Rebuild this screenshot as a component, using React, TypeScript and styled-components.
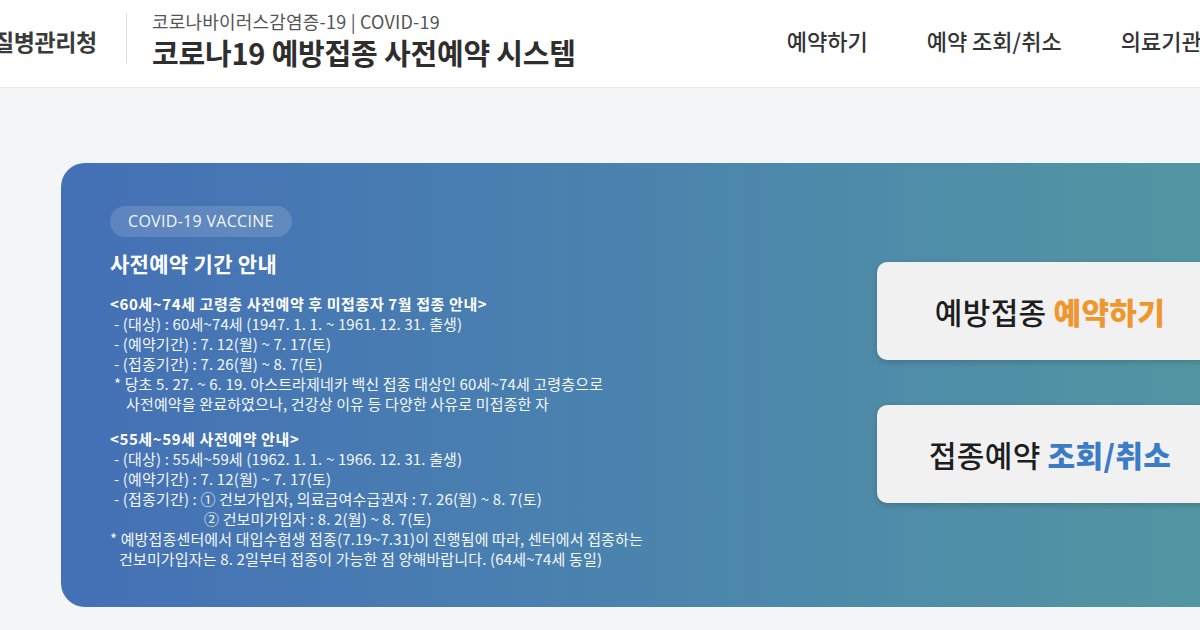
import React from "react";
import styled, { createGlobalStyle } from "styled-components";

const Global = createGlobalStyle`
  html, body { margin: 0; padding: 0; }
  body {
    width: 1200px;
    height: 630px;
    overflow: hidden;
    background: #f4f5f7;
    font-family: "Noto Sans CJK KR", "Noto Sans", sans-serif;
  }
`;

const Header = styled.header`
  height: 88px;
  background: #ffffff;
  border-bottom: 1px solid #ebebeb;
  display: flex;
  align-items: center;
  box-sizing: border-box;
  white-space: nowrap;
  & > * { flex-shrink: 0; }
`;

const Agency = styled.div`
  margin-left: -7px;
  width: 133px;
  font-size: 23px;
  font-weight: 700;
  color: #3a3a3a;
  letter-spacing: -0.4px;
  margin-top: -6px;
`;

const Divider = styled.div`
  width: 1px;
  height: 50px;
  background: #dcdcdc;
  margin-top: -12px;
`;

const TitleBlock = styled.div`
  display: flex;
  flex-direction: column;
  gap: 4px;
  margin-left: 25px;
  margin-top: -8px;
`;

const SubTitle = styled.div`
  font-size: 18px;
  color: #555;
  letter-spacing: 0.2px;
  line-height: 20px;
  font-weight: 400;
`;

const MainTitle = styled.div`
  font-size: 29px;
  font-weight: 700;
  color: #2e2e2e;
  letter-spacing: -0.2px;
  line-height: 34px;
`;

const Nav = styled.nav`
  margin-left: 211px;
  display: flex;
  gap: 59px;
  margin-top: -8px;
`;

const NavItem = styled.a`
  font-size: 22px;
  font-weight: 500;
  color: #333;
  letter-spacing: 0px;
  text-decoration: none;
`;

const Main = styled.main`
  padding: 75px 0 0 61px;
`;

const Panel = styled.section`
  width: 1240px;
  height: 444px;
  border-radius: 24px;
  background: linear-gradient(90deg, #4470b6 0%, #4a83ae 45%, #5499a0 100%);
  display: flex;
  box-sizing: border-box;
  padding: 43px 0 0 49px;
  white-space: nowrap;
`;

const Info = styled.div`
  display: flex;
  flex-direction: column;
  color: #ffffff;
`;

const Badge = styled.div`
  align-self: flex-start;
  height: 31px;
  line-height: 31px;
  padding: 0 18px;
  border-radius: 16px;
  background: rgba(255, 255, 255, 0.14);
  font-size: 16px;
  color: #f2f5fa;
  font-family: "Open Sans", "Noto Sans", sans-serif;
  letter-spacing: 0.3px;
`;

const Heading = styled.h2`
  margin: 11px 0 16px;
  font-size: 21px;
  font-weight: 700;
  letter-spacing: 0.3px;
  line-height: 30px;
`;

const Group = styled.div<{ $gap?: number }>`
  margin-top: ${(p) => p.$gap ?? 0}px;
  display: flex;
  flex-direction: column;
`;

const GroupTitle = styled.div`
  font-size: 15px;
  font-weight: 700;
  line-height: 20px;
  letter-spacing: 0.6px;
`;

const Line = styled.div<{ $indent?: number }>`
  font-size: 15px;
  line-height: 20px;
  letter-spacing: 0.15px;
  padding-left: ${(p) => p.$indent ?? 4}px;
  color: #f4f7fb;
`;

const Actions = styled.div`
  margin-left: auto;
  display: flex;
  flex-direction: column;
  gap: 45px;
  padding-top: 56px;
  margin-right: 78px;
`;

const ActionButton = styled.button`
  width: 346px;
  height: 98px;
  border: none;
  border-radius: 10px;
  background: #f1f1f1;
  box-shadow: 0 2px 6px rgba(0, 0, 0, 0.18);
  font-family: "Noto Sans CJK KR", "Noto Sans", sans-serif;
  font-size: 30px;
  font-weight: 500;
  color: #1e1e1e;
  letter-spacing: 0.3px;
  cursor: pointer;
`;

const Accent = styled.strong<{ $color: string }>`
  color: ${(p) => p.$color};
  font-weight: 800;
`;

export default function App() {
  return (
    <>
      <Global />
      <Header>
        <Agency>질병관리청</Agency>
        <Divider />
        <TitleBlock>
          <SubTitle>코로나바이러스감염증-19 | COVID-19</SubTitle>
          <MainTitle>코로나19 예방접종 사전예약 시스템</MainTitle>
        </TitleBlock>
        <Nav>
          <NavItem>예약하기</NavItem>
          <NavItem>예약 조회/취소</NavItem>
          <NavItem>의료기관 찾기</NavItem>
        </Nav>
      </Header>
      <Main>
        <Panel>
          <Info>
            <Badge>COVID-19 VACCINE</Badge>
            <Heading>사전예약 기간 안내</Heading>
            <Group>
              <GroupTitle>&lt;60세~74세 고령층 사전예약 후 미접종자 7월 접종 안내&gt;</GroupTitle>
              <Line>- (대상) : 60세~74세 (1947. 1. 1. ~ 1961. 12. 31. 출생)</Line>
              <Line>- (예약기간) : 7. 12(월) ~ 7. 17(토)</Line>
              <Line>- (접종기간) : 7. 26(월) ~ 8. 7(토)</Line>
              <Line>* 당초 5. 27. ~ 6. 19. 아스트라제네카 백신 접종 대상인 60세~74세 고령층으로</Line>
              <Line $indent={16}>사전예약을 완료하였으나, 건강상 이유 등 다양한 사유로 미접종한 자</Line>
            </Group>
            <Group $gap={15}>
              <GroupTitle>&lt;55세~59세 사전예약 안내&gt;</GroupTitle>
              <Line>- (대상) : 55세~59세 (1962. 1. 1. ~ 1966. 12. 31. 출생)</Line>
              <Line>- (예약기간) : 7. 12(월) ~ 7. 17(토)</Line>
              <Line>- (접종기간) : ① 건보가입자, 의료급여수급권자 : 7. 26(월) ~ 8. 7(토)</Line>
              <Line $indent={94}>② 건보미가입자 : 8. 2(월) ~ 8. 7(토)</Line>
              <Line $indent={0}>* 예방접종센터에서 대입수험생 접종(7.19~7.31)이 진행됨에 따라, 센터에서 접종하는</Line>
              <Line $indent={9}>건보미가입자는 8. 2일부터 접종이 가능한 점 양해바랍니다. (64세~74세 동일)</Line>
            </Group>
          </Info>
          <Actions>
            <ActionButton>
              예방접종 <Accent $color="#ef962f">예약하기</Accent>
            </ActionButton>
            <ActionButton>
              접종예약 <Accent $color="#3c7cc6">조회/취소</Accent>
            </ActionButton>
          </Actions>
        </Panel>
      </Main>
    </>
  );
}
